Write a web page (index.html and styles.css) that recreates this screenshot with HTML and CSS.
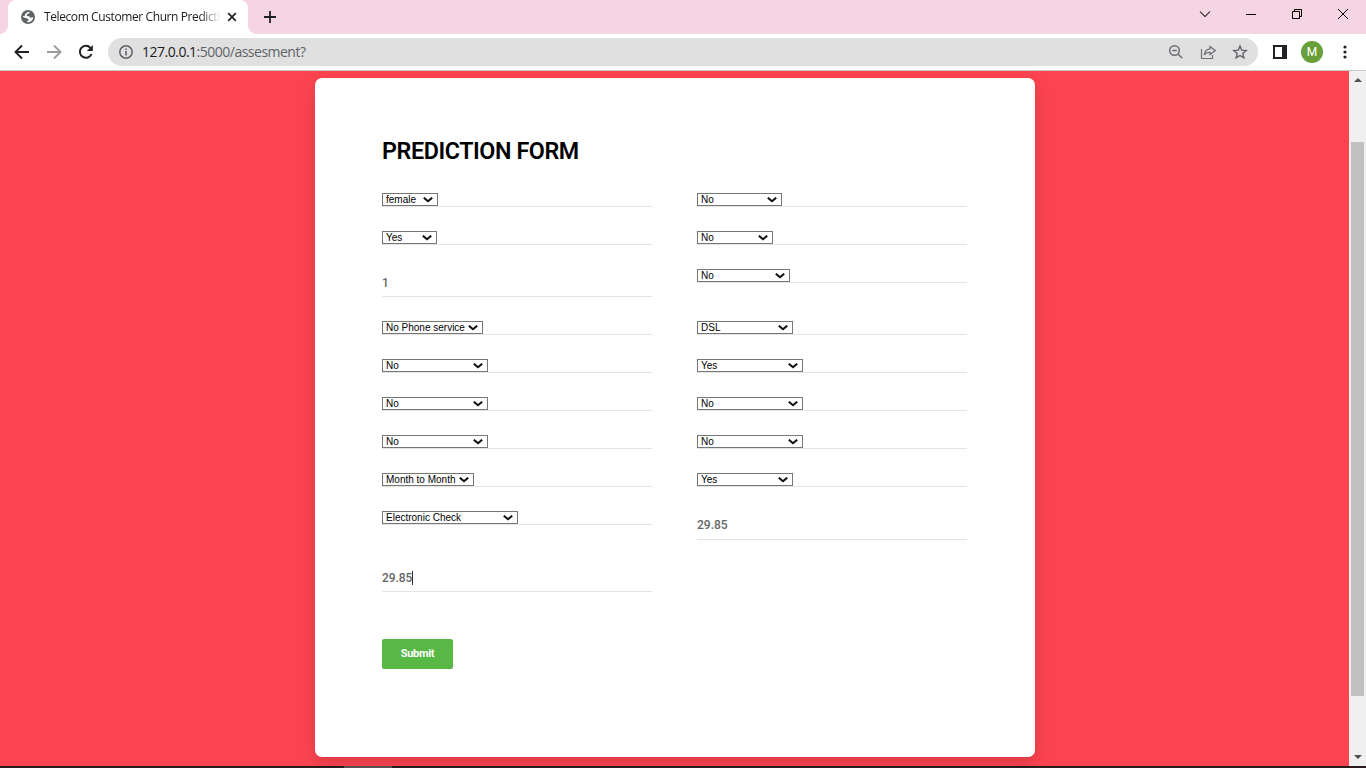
FILE: index.html
```html
<!DOCTYPE html>
<html lang="en">
<head>
<meta charset="utf-8">
<title>Telecom Customer Churn Prediction</title>
<link rel="stylesheet" href="styles.css">
</head>
<body>
<svg class="defs" width="0" height="0"><defs>
  <symbol id="chev" viewBox="0 0 10 6"><path d="M.8 .7l4.200 3.600L9.200 .7" fill="none" stroke="#101010" stroke-width="2"/></symbol>
</defs></svg>
<div class="window">
  <div class="tabstrip">
    <div class="tab">
      <svg class="globe" width="14" height="14" viewBox="0 0 14 14"><circle cx="7" cy="7" r="7" fill="#5f6368"/><path d="M8.500 1.800C9 3.400 7.800 3.700 6.300 4C5.600 4.900 5.200 5.600 6.200 6.100C7.600 6.500 9 6.300 9.100 7.700C10.500 7.900 11.300 7.200 12.300 7.300C12 10 9.900 12.200 7 12.300C5.800 12.200 5.600 11.600 6.500 10.900C8 10.300 8 9.200 6.700 8.700C5 8.200 3.600 8.100 2 7.100C1.700 6.500 2.600 6 3.600 6.100C3.800 4.200 5.600 2 8.500 1.800Z" fill="#fff"/></svg>
      <span class="tab-title">Telecom Customer Churn Predicti</span>
      <svg class="tab-close" width="10" height="10" viewBox="0 0 10 10"><path d="M1.200 1.200l7.600 7.600M8.800 1.200L1.200 8.800" stroke="#202124" stroke-width="1.700"/></svg>
    </div>
    <svg class="newtab" width="12" height="12" viewBox="0 0 12 12"><path d="M6 0v12M0 6h12" stroke="#202124" stroke-width="1.800"/></svg>
    <div class="controls">
      <svg width="12" height="12" viewBox="0 0 12 12"><path d="M1 3.500l5 5 5-5" fill="none" stroke="#111" stroke-width="1.050"/></svg>
      <svg width="12" height="12" viewBox="0 0 12 12"><path d="M1 6.500h10" stroke="#000"/></svg>
      <svg width="12" height="12" viewBox="0 0 12 12"><path d="M1.500 3.500h7v7h-7zM3.500 3.500v-2h7v7h-2" fill="none" stroke="#000"/></svg>
      <svg width="12" height="12" viewBox="0 0 12 12"><path d="M1 1l10 10M11 1L1 11" stroke="#000"/></svg>
    </div>
  </div>
  <div class="toolbar">
    <div class="nav">
      <svg width="16" height="16" viewBox="0 0 16 16"><path d="M15 8H2M8 1.500L1.500 8L8 14.500" fill="none" stroke="#202124" stroke-width="1.900"/></svg>
      <svg width="16" height="16" viewBox="0 0 16 16"><path d="M1 8h13M8 1.500L14.500 8L8 14.500" fill="none" stroke="#9c9c9c" stroke-width="1.900"/></svg>
      <svg width="16" height="16" viewBox="0 0 16 16"><path d="M13.500 10A6 6 0 1 1 12.400 3.800" fill="none" stroke="#202124" stroke-width="2"/><path d="M14.800 1v6h-6z" fill="#202124"/></svg>
    </div>
    <div class="address">
      <svg width="14" height="14" viewBox="0 0 14 14"><circle cx="7" cy="7" r="6.200" fill="none" stroke="#5f6368" stroke-width="1.500"/><path d="M7 6v4.500M7 3.400v1.500" stroke="#5f6368" stroke-width="1.600"/></svg>
      <span class="url"><b>127.0.0.1</b>:5000/assesment?</span>
      <div class="actions">
        <svg width="16" height="16" viewBox="0 0 16 16"><circle cx="6.500" cy="6.500" r="4.800" fill="none" stroke="#6b6e72" stroke-width="1.500"/><path d="M4.200 6.500h4.600M10 10l4.300 4.300" stroke="#6b6e72" stroke-width="1.500"/></svg>
        <svg width="16" height="16" viewBox="0 0 16 16"><path d="M1.500 5v9.500h11V11" fill="none" stroke="#6b6e72" stroke-width="1.200"/><path d="M10 2.500L15.200 6.500L10 10.500V8.400C7.500 8.200 5.600 9 4.200 11C4.600 7.600 6.500 5.300 10 4.800Z" fill="none" stroke="#6b6e72" stroke-width="1.200"/></svg>
        <svg width="16" height="16" viewBox="0 0 16 16"><path d="M8 2l1.700 4.100 4.500.4-3.400 2.900 1 4.400L8 11.500l-3.800 2.300 1-4.400L1.800 6.500l4.500-.4z" fill="none" stroke="#5f6368" stroke-width="1.400"/></svg>
      </div>
    </div>
    <svg class="panel" width="14" height="14" viewBox="0 0 14 14"><path d="M0 0h14v14H0zM2 2v10h7V2z" fill="#202124" fill-rule="evenodd"/></svg>
    <span class="avatar">M</span>
    <svg class="dots" width="4" height="14" viewBox="0 0 4 14"><circle cx="2" cy="2" r="1.600"/><circle cx="2" cy="7" r="1.600"/><circle cx="2" cy="12" r="1.600"/></svg>
  </div>
  <div class="viewport">
    <main class="page">
      <section class="card">
        <h1>PREDICTION FORM</h1>
        <form class="form">
          <div class="field"><span class="select w56">female<svg><use href="#chev"/></svg></span></div>
          <div class="field"><span class="select w85">No<svg><use href="#chev"/></svg></span></div>
          <div class="field"><span class="select w55">Yes<svg><use href="#chev"/></svg></span></div>
          <div class="field"><span class="select w76">No<svg><use href="#chev"/></svg></span></div>
          <div class="field text"><span>1</span></div>
          <div class="field"><span class="select w93">No<svg><use href="#chev"/></svg></span></div>
          <div class="field"><span class="select w101">No Phone service<svg><use href="#chev"/></svg></span></div>
          <div class="field"><span class="select w96">DSL<svg><use href="#chev"/></svg></span></div>
          <div class="field"><span class="select w106">No<svg><use href="#chev"/></svg></span></div>
          <div class="field"><span class="select w106">Yes<svg><use href="#chev"/></svg></span></div>
          <div class="field"><span class="select w106">No<svg><use href="#chev"/></svg></span></div>
          <div class="field"><span class="select w106">No<svg><use href="#chev"/></svg></span></div>
          <div class="field"><span class="select w106">No<svg><use href="#chev"/></svg></span></div>
          <div class="field"><span class="select w106">No<svg><use href="#chev"/></svg></span></div>
          <div class="field"><span class="select w92">Month to Month<svg><use href="#chev"/></svg></span></div>
          <div class="field"><span class="select w96">Yes<svg><use href="#chev"/></svg></span></div>
          <div class="field"><span class="select w136">Electronic Check<svg><use href="#chev"/></svg></span></div>
          <div class="field text tall"><span>29.85</span></div>
          <div class="field text"><span class="caret">29.85</span></div>
        </form>
        <button class="submit" type="button">Submit</button>
      </section>
    </main>
    <div class="scrollbar">
      <svg width="8" height="4" viewBox="0 0 8 4"><path d="M0 4L4 0l4 4z" fill="#505050"/></svg>
      <div class="thumb"></div>
      <svg class="down" width="8" height="4" viewBox="0 0 8 4"><path d="M0 0h8L4 4z" fill="#505050"/></svg>
    </div>
  </div>
  <div class="taskbar"><div class="task-active"></div></div>
</div>
</body>
</html>
```
FILE: styles.css
```css
* { box-sizing: border-box; }
body { margin: 0; overflow: hidden; font-family: Roboto, sans-serif; }
svg { display: block; flex: none; }
.defs { position: absolute; }
.window { width: 1366px; height: 768px; display: flex; flex-direction: column; }

.tabstrip { height: 34px; background: #f6d5e3; display: flex; align-items: center; padding-left: 8px; flex: none; }
.tab { width: 240px; height: 34px; background: #fff; border-radius: 8px 8px 0 0; display: flex; align-items: center; padding: 0 11px 0 13px; position: relative; }
.tab::before, .tab::after { content: ""; position: absolute; bottom: 0; width: 8px; height: 8px; }
.tab::before { left: -8px; background: radial-gradient(circle at 0 0, transparent 7.500px, #fff 8px); }
.tab::after { right: -8px; background: radial-gradient(circle at 100% 0, transparent 7.500px, #fff 8px); }
.tab-title { margin-left: 9px; width: 178px; overflow: hidden; white-space: nowrap; font: 12px/18px "Open Sans", sans-serif; letter-spacing: -0.4px; color: #202124; -webkit-mask-image: linear-gradient(90deg, #000 156px, transparent 177px); mask-image: linear-gradient(90deg, #000 156px, transparent 177px); }
.tab-close { margin-left: auto; }
.newtab { margin-left: 16px; }
.controls { margin-left: auto; display: flex; gap: 34px; padding-right: 17px; margin-top: -6px; }

.toolbar { height: 37px; flex: none; background: #fff; border-bottom: 1px solid #c9c9c9; display: flex; align-items: center; padding-left: 14px; }
.nav { display: flex; gap: 16px; }
.address { margin-left: 14px; width: 1150px; height: 28px; border-radius: 14px; background: #e0e0e0; display: flex; align-items: center; padding: 0 10px 0 11px; }
.url { margin-left: 9px; font: 14px/20px "Open Sans", sans-serif; color: #5f6368; white-space: nowrap; letter-spacing: -0.5px; }
.url b { font-weight: 400; color: #202124; }
.actions { margin-left: auto; display: flex; gap: 16px; }
.panel { margin-left: 15px; }
.avatar { margin-left: 14px; width: 22px; height: 22px; border-radius: 50%; background: #689f38; color: #fff; font-size: 12px; line-height: 22px; text-align: center; }
.dots { margin-left: 19.500px; fill: #202124; }

.viewport { height: 695px; display: flex; flex: none; overflow: hidden; }
.page { width: 1349px; background: #fc4450; padding: 7px 0 0 315px; }
.card { width: 720px; height: 679px; background: #fff; border-radius: 7px; box-shadow: 0 6px 16px rgba(0, 0, 0, 0.15); padding: 57px 67px 0; }
h1 { margin: 0; font-size: 23.300px; line-height: 32px; font-weight: 600; color: #000; white-space: nowrap; letter-spacing: -0.42px; }
.form { margin-top: 26px; display: grid; grid-template-columns: 270px 270px; column-gap: 45px; row-gap: 24px; align-items: start; }
.field { height: 14px; border-bottom: 1px solid #e5e5e5; }
.field.text { height: 28px; font-size: 12px; font-weight: 500; line-height: 28px; color: #666; }
.field.tall { height: 29px; line-height: 28px; }
.caret { display: inline-block; line-height: 14px; border-right: 1px solid #333; letter-spacing: -0.1px; }
.select { display: flex; align-items: center; justify-content: space-between; height: 13px; border: 1px solid #767676; padding: 0 4px 0 3px; font: 10px/11px "Liberation Sans", Arial, sans-serif; color: #000; white-space: nowrap; }
.select svg { width: 10px; height: 6px; }
.w55 { width: 55px; } .w56 { width: 56px; } .w76 { width: 76px; } .w85 { width: 85px; }
.w92 { width: 92px; } .w93 { width: 93px; } .w96 { width: 96px; } .w101 { width: 101px; }
.w106 { width: 106px; } .w136 { width: 136px; }
.submit { display: block; margin-top: 47px; width: 71px; height: 30px; border: 0; border-radius: 2px; background: #57b846; color: #fff; font: 700 11px/28px Roboto, sans-serif; letter-spacing: -0.3px; padding: 0; }

.scrollbar { width: 17px; background: #f0f0f0; display: flex; flex-direction: column; align-items: center; padding: 7px 0; }
.thumb { width: 13px; height: 554px; margin-top: 60px; background: #c1c1c1; }
.down { margin-top: auto; }
.taskbar { height: 2px; background: #2b1b1d; padding-left: 344px; }
.task-active { width: 48px; height: 2px; background: #5b4e4f; }
```
